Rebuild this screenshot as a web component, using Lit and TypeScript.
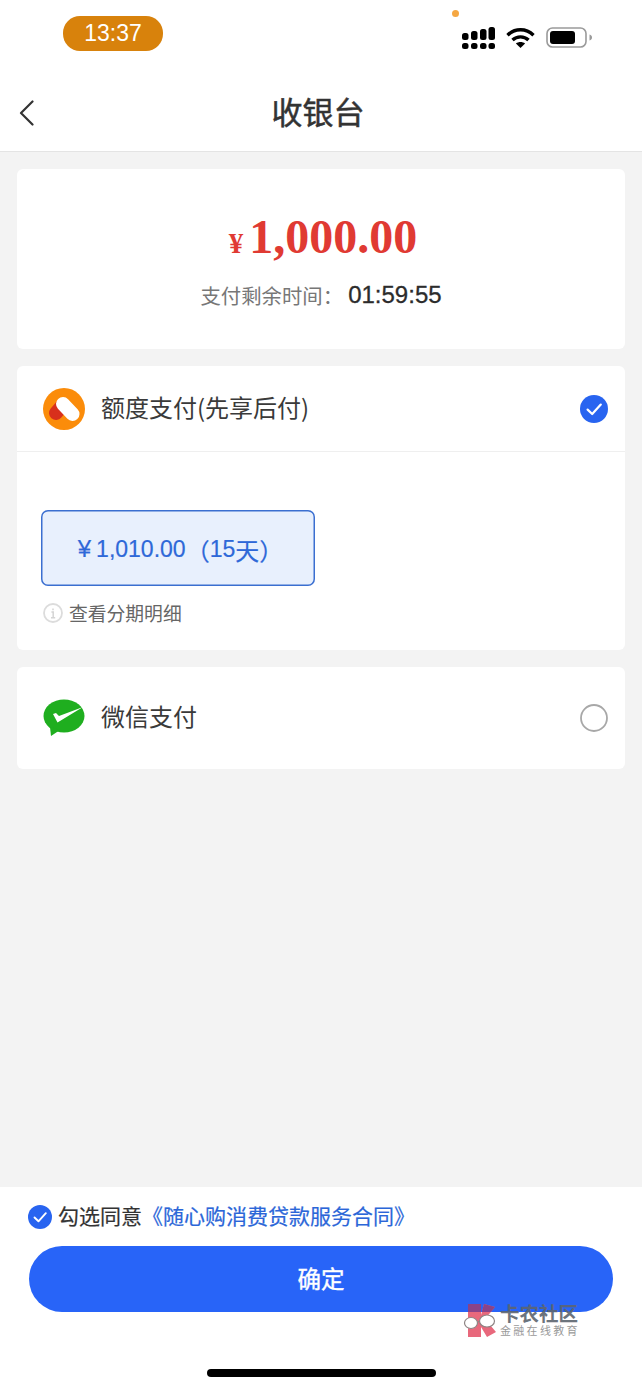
import { LitElement, html, css } from "lit";
import { customElement } from "lit/decorators.js";

const check = (size: number) => html`<svg width=${size} height=${size} viewBox="0 0 28 28"><circle cx="14" cy="14" r="14" fill="#2864f0"/><path d="M7.6 14.6l4.6 4.4 8.6-9.4" fill="none" stroke="#fff" stroke-width="2.2" stroke-linecap="round" stroke-linejoin="round"/></svg>`;

@customElement("app-root")
export class AppRoot extends LitElement {
  static styles = css`
    :host { display: flex; flex-direction: column; height: 1389px; width: 642px; background: #fff; overflow: hidden;
      font-family: "Noto Sans CJK SC", "Liberation Sans", sans-serif; color: #333; position: relative; }
    .status { height: 70px; flex: none; display: flex; align-items: flex-start; padding: 16px 49px 0 63px; box-sizing: border-box; position: relative; }
    .pill { width: 100px; height: 35px; border-radius: 17px; background: #d8820c; color: #fff; font: 23px/35px "Liberation Sans", sans-serif; text-align: center; }
    .dot { position: absolute; left: 452px; top: 10px; width: 7px; height: 7px; border-radius: 50%; background: #f5a742; }
    .icons { margin-left: auto; margin-top: 11px; display: flex; align-items: flex-start; gap: 11px; }
    .icons svg { display: block; }
    .nav { height: 81px; flex: none; border-bottom: 1px solid #e4e4e4; display: flex; align-items: center; justify-content: center; position: relative; padding-right: 6px; box-sizing: content-box; }
    .back { position: absolute; left: 19px; top: 30px; display: block; }
    .title { font-size: 31px; font-weight: 400; line-height: 40px; color: #333; -webkit-text-stroke: 0.5px #333; }
    .main { flex: 1; background: #f3f3f3; padding: 17px; display: flex; flex-direction: column; gap: 17px; min-height: 0; }
    .card { background: #fff; border-radius: 6px; }
    .amount-card { height: 180px; box-sizing: border-box; padding-top: 39px; display: flex; flex-direction: column; align-items: center; }
    .amount { color: #e03a33; font-family: "Liberation Serif", serif; font-weight: 700; font-size: 48px; line-height: 58px; display: flex; align-items: baseline; gap: 6px; padding-left: 4px; }
    .amount small { font-size: 29px; }
    .remain { margin-top: 9px; font-size: 20.4px; line-height: 28px; color: #777; display: flex; align-items: center; }
    .remain b { font: 400 24px/28px "Liberation Sans", sans-serif; color: #2c2c2c; margin-left: 5px; -webkit-text-stroke: 0.3px #2c2c2c; }
    .pay-head { height: 85px; display: flex; align-items: center; padding: 0 17px 0 26px; border-bottom: 1px solid #efefef; }
    .pay-head.plain { border-bottom: 0; height: 102px; box-sizing: border-box; }
    .pay-label { margin-left: 16px; font-size: 24px; line-height: 32px; color: #3a3a3a; flex: 1; padding-bottom: 4px; }
    .plain .pay-label { padding-bottom: 5px; }
    .pay-head svg { display: block; flex: none; }
    .pay-body { padding: 58px 24px 0; height: 140px; }
    .option { width: 274px; height: 76px; box-sizing: border-box; box-shadow: inset 0 0 0 1.5px #3b6fd0; border-radius: 7px; background: #e8f0fd; color: #2e68d8;
      font-size: 24px; display: flex; align-items: center; justify-content: center; padding: 2px 0 0 5px; white-space: pre; -webkit-text-stroke: 0.2px #2e68d8; }
    .option span { font-family: "Liberation Sans", sans-serif; font-size: 23px; }
    .option .yen { margin-right: 5px; font-size: 24px; }
    .detail { margin-top: 14px; padding-left: 2px; display: flex; align-items: center; gap: 6px; font-size: 18.8px; line-height: 26px; color: #666; }
    .detail svg { display: block; }
    .footer { height: 202px; flex: none; background: #fff; position: relative; display: flex; flex-direction: column; }
    .agree { margin-top: 18px; padding-left: 28px; height: 24px; display: flex; align-items: center; font-size: 21px; line-height: 24px; color: #333; white-space: nowrap; }
    .agree svg { display: block; margin-right: 6px; }
    .agree span, .agree a { position: relative; padding-bottom: 4px; -webkit-text-stroke: 0.2px currentColor; }
    .agree a { color: #2b66d8; }
    .confirm { margin: 17px 29px 0; height: 66px; border-radius: 33px; background: #2864f8; color: #fff; font-size: 23.5px; -webkit-text-stroke: 0.4px #fff; padding-bottom: 3px; box-sizing: border-box; display: flex; align-items: center; justify-content: center; }
    .home { width: 229px; height: 8px; border-radius: 4px; background: #000; margin: 57px auto 0; }
    .mark { position: absolute; left: 463px; top: 114px; display: flex; gap: 3px; align-items: flex-start; }
    .mark svg { display: block; margin-top: 2px; }
    .mark-text { display: flex; flex-direction: column; padding-top: 1px; }
    .m1 { font-size: 19.5px; line-height: 22px; font-weight: 700; color: #5d6570; opacity: .9; white-space: nowrap; }
    .m2 { font-size: 11px; line-height: 12px; color: #9a9a9a; letter-spacing: 2.3px; white-space: nowrap; }
  `;

  render() {
    return html`
      <div class="status">
        <div class="pill">13:37</div>
        <i class="dot"></i>
        <div class="icons">
          <svg width="33" height="22" viewBox="0 0 33 22" fill="#000">
            <rect x="0" y="6" width="6.500" height="7" rx="2.500"/><rect x="9" y="4" width="6.500" height="9" rx="2.500"/><rect x="18" y="2" width="6.500" height="11" rx="2.500"/><rect x="26.500" y="0" width="6.500" height="13" rx="2.500"/>
            <rect x="0" y="16" width="6.500" height="6" rx="2.500"/><rect x="9" y="16" width="6.500" height="6" rx="2.500"/><rect x="18" y="16" width="6.500" height="6" rx="2.500"/><rect x="26.500" y="16" width="6.500" height="6" rx="2.500"/>
          </svg>
          <svg width="29" height="21" viewBox="0 0 29 21" fill="none" stroke="#000" stroke-width="3.4">
            <path d="M1.500 8.200C9 1 20 1 27.500 8.200"/><path d="M6.500 13C11 8.800 18 8.800 22.500 13"/><path d="M14.500 21l-4.600-4.600c2.600-2 6.600-2 9.200 0z" fill="#000" stroke="none"/>
          </svg>
          <svg width="47" height="21" viewBox="0 0 47 21">
            <rect x="1" y="1" width="39" height="19" rx="5.500" fill="#fff" stroke="#9a9a9a" stroke-width="1.600"/>
            <rect x="4" y="4" width="25" height="13" rx="3" fill="#000"/>
            <path d="M43.500 7.500c1.800.5 2.500 1.600 2.500 3s-.7 2.500-2.500 3z" fill="#9a9a9a"/>
          </svg>
        </div>
      </div>
      <div class="nav">
        <svg class="back" width="16" height="26" viewBox="0 0 16 26" fill="none" stroke="#333" stroke-width="2.200" stroke-linecap="round" stroke-linejoin="round"><path d="M13.500 1.500L2 13l11.500 11.500"/></svg>
        <div class="title">收银台</div>
      </div>
      <div class="main">
        <div class="card amount-card">
          <div class="amount"><small>¥</small>1,000.00</div>
          <div class="remain">支付剩余时间：<b>01:59:55</b></div>
        </div>
        <div class="card">
          <div class="pay-head">
            <svg width="42" height="42" viewBox="0 0 42 42">
              <circle cx="21" cy="21" r="21" fill="#fb8c0a"/>
              <path d="M19 18l-6 7" stroke="#d8301c" stroke-width="14" stroke-linecap="round"/>
              <path d="M20 16l9.500 10" stroke="#fff" stroke-width="14" stroke-linecap="round"/>
            </svg>
            <div class="pay-label">额度支付(先享后付)</div>
            ${check(28)}
          </div>
          <div class="pay-body">
            <div class="option"><span class="yen">¥</span><span>1,010.00</span>（<span>15</span>天）</div>
            <div class="detail">
              <svg width="20" height="20" viewBox="0 0 20 20"><circle cx="10" cy="10" r="9" fill="none" stroke="#dcdcdc" stroke-width="1.800"/><path d="M10 5.400v1.800M8.400 9h1.800v5.600M8 14.800h4.200" fill="none" stroke="#d4d4d4" stroke-width="1.500"/></svg>
              查看分期明细
            </div>
          </div>
        </div>
        <div class="card">
          <div class="pay-head plain">
            <svg width="42" height="38" viewBox="0 0 42 38">
              <ellipse cx="21" cy="17" rx="20.500" ry="16.500" fill="#1fae1f"/>
              <path d="M7 28l1 9 9-6z" fill="#1fae1f"/>
              <path d="M10 15l4.500 8.500L40 8 16 17l-3-3z" fill="#fff"/>
            </svg>
            <div class="pay-label">微信支付</div>
            <svg width="28" height="28" viewBox="0 0 28 28"><circle cx="14" cy="14" r="13" fill="#fff" stroke="#a8a8a8" stroke-width="1.800"/></svg>
          </div>
        </div>
      </div>
      <div class="footer">
        <div class="agree">
          ${check(24)}
          <span>勾选同意</span><a>《随心购消费贷款服务合同》</a>
        </div>
        <div class="confirm">确定</div>
        <div class="home"></div>
        <div class="mark">
          <svg width="34" height="35" viewBox="0 0 34 35">
            <defs><clipPath id="top"><rect width="34" height="9"/></clipPath></defs>
            <path d="M5 1h13v11L21 1l11 3-10 12 11 13-9 5-6-10v10H5z" fill="#e8687c"/>
            <path d="M5 1h13v11L21 1l11 3-10 12 11 13-9 5-6-10v10H5z" fill="#8a4388" clip-path="url(#top)"/>
            <ellipse cx="8" cy="20" rx="6.500" ry="5.500" fill="#fff" stroke="#8e8484" stroke-width="1.200"/>
            <ellipse cx="24" cy="18" rx="7.500" ry="6" fill="#fff" stroke="#8e8484" stroke-width="1.200"/>
            <path d="M14.500 19l2-.5" stroke="#8e8484" stroke-width="1.200" fill="none"/>
          </svg>
          <div class="mark-text">
            <div class="m1">卡农社区</div>
            <div class="m2">金融在线教育</div>
          </div>
        </div>
      </div>
    `;
  }
}
